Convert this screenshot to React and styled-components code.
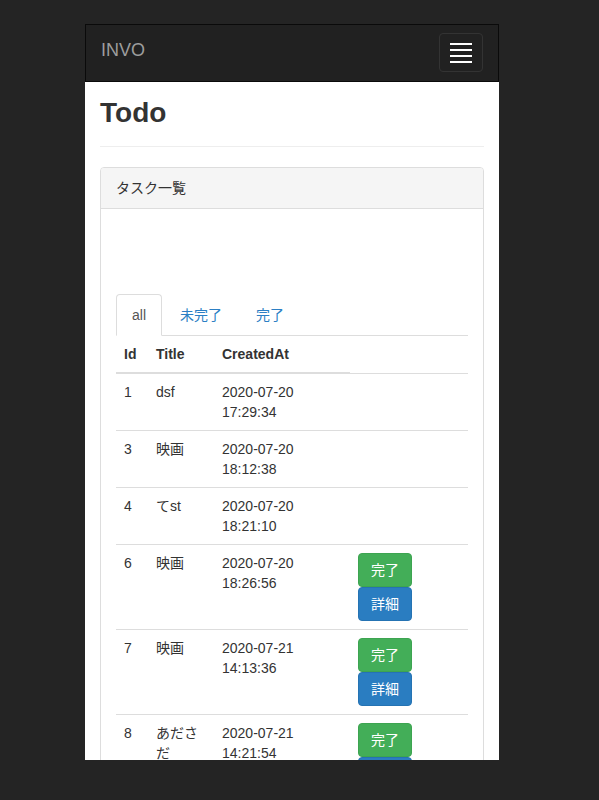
import React from 'react'
import styled, { createGlobalStyle } from 'styled-components'

const GlobalStyle = createGlobalStyle`
  html, body {
    margin: 0;
    padding: 0;
    background: #242424;
  }
  body {
    font-family: "Liberation Sans", Arial, "Noto Sans CJK JP", sans-serif;
    font-size: 14px;
    line-height: 20px;
    color: #333;
  }
  * {
    box-sizing: border-box;
  }
`

const tasks = [
  { id: 1, title: 'dsf', date: '2020-07-20', time: '17:29:34', done: true },
  { id: 3, title: '映画', date: '2020-07-20', time: '18:12:38', done: true },
  { id: 4, title: 'てst', date: '2020-07-20', time: '18:21:10', done: true },
  { id: 6, title: '映画', date: '2020-07-20', time: '18:26:56', done: false },
  { id: 7, title: '映画', date: '2020-07-21', time: '14:13:36', done: false },
  { id: 8, title: 'あださだ', date: '2020-07-21', time: '14:21:54', done: false },
]

function App() {
  return (
    <>
      <GlobalStyle />
      <Screen>
        <Navbar>
          <Brand>INVO</Brand>
          <Toggle aria-label="menu">
            <Bar />
            <Bar />
            <Bar />
            <Bar />
          </Toggle>
        </Navbar>
        <Content>
          <PageHeader>Todo</PageHeader>
          <Panel>
            <PanelHeading>タスク一覧</PanelHeading>
            <PanelBody>
              <Spacer />
              <Tabs>
                <Tab active>all</Tab>
                <Tab>未完了</Tab>
                <Tab>完了</Tab>
              </Tabs>
              <Table>
                <colgroup>
                  <col style={{ width: 32 }} />
                  <col style={{ width: 66 }} />
                  <col style={{ width: 136 }} />
                  <col />
                </colgroup>
                <thead>
                  <tr>
                    <Th>Id</Th>
                    <Th>Title</Th>
                    <Th>CreatedAt</Th>
                    <Th empty />
                  </tr>
                </thead>
                <tbody>
                  {tasks.map(t => (
                    <tr key={t.id}>
                      <Td>{t.id}</Td>
                      <Td>{t.title}</Td>
                      <Td>{t.date} {t.time}</Td>
                      <Td>
                        {!t.done && (
                          <ActionStack>
                            <Btn variant="success">完了</Btn>
                            <Btn variant="primary">詳細</Btn>
                          </ActionStack>
                        )}
                      </Td>
                    </tr>
                  ))}
                </tbody>
              </Table>
            </PanelBody>
          </Panel>
        </Content>
      </Screen>
    </>
  )
}
export default App

const Screen = styled.div`
  width: 414px;
  height: 736px;
  margin: 24px 0 0 85px;
  background: #fff;
  overflow: hidden;
`

const Navbar = styled.nav`
  height: 58px;
  background: #212121;
  border: 1px solid #0a0a0a;
  display: flex;
  justify-content: space-between;
  align-items: flex-start;
`

const Brand = styled.a`
  padding: 15px;
  font-size: 18px;
  line-height: 20px;
  color: #9d9d9d;
`

const Toggle = styled.button`
  width: 44px;
  height: 39px;
  margin: 8px 15px 0 0;
  padding: 0;
  background: transparent;
  border: 1px solid #333;
  border-radius: 4px;
  display: flex;
  flex-direction: column;
  align-items: center;
  justify-content: center;
  gap: 4px;
`

const Bar = styled.span`
  display: block;
  width: 22px;
  height: 2px;
  background: #fff;
`

const Content = styled.div`
  padding: 0 15px;
`

const PageHeader = styled.h1`
  margin: 15px 0 20px;
  padding-bottom: 18px;
  border-bottom: 1px solid #eee;
  font-size: 28px;
  line-height: 31px;
  font-weight: bold;
  color: #333;
`

const Panel = styled.div`
  border: 1px solid #ddd;
  border-radius: 4px;
  background: #fff;
`

const PanelHeading = styled.div`
  padding: 10px 15px;
  background: #f5f5f5;
  border-bottom: 1px solid #ddd;
  border-radius: 3px 3px 0 0;
`

const PanelBody = styled.div`
  padding: 15px;
`

const Spacer = styled.div`
  height: 70px;
`

const Tabs = styled.ul`
  display: flex;
  margin: 0;
  padding: 0;
  list-style: none;
  border-bottom: 1px solid #ddd;
`

const Tab = styled.li`
  margin: 0 2px -1px 0;
  padding: 10px 15px;
  line-height: 20px;
  border: 1px solid ${p => (p.active ? '#ddd' : 'transparent')};
  border-bottom-color: ${p => (p.active ? '#fff' : 'transparent')};
  border-radius: 4px 4px 0 0;
  background: ${p => (p.active ? '#fff' : 'transparent')};
  color: ${p => (p.active ? '#555' : '#2c7fc4')};
`

const Table = styled.table`
  width: 100%;
  table-layout: fixed;
  border-collapse: collapse;
`

const Th = styled.th`
  padding: 8px;
  text-align: left;
  font-weight: bold;
  line-height: 20px;
  border-bottom: ${p => (p.empty ? '1px' : '2px')} solid #ddd;
`

const Td = styled.td`
  padding: 8px;
  vertical-align: top;
  line-height: 20px;
  border-top: 1px solid #ddd;
`

const ActionStack = styled.div`
  display: flex;
  flex-direction: column;
  align-items: flex-start;
`

const Btn = styled.button`
  padding: 6px 12px;
  font-family: inherit;
  font-size: 14px;
  line-height: 20px;
  color: #fff;
  border-radius: 4px;
  border: 1px solid ${p => (p.variant === 'success' ? '#3da451' : '#2573b3')};
  background: ${p => (p.variant === 'success' ? '#43ae58' : '#2a7dc1')};
`
